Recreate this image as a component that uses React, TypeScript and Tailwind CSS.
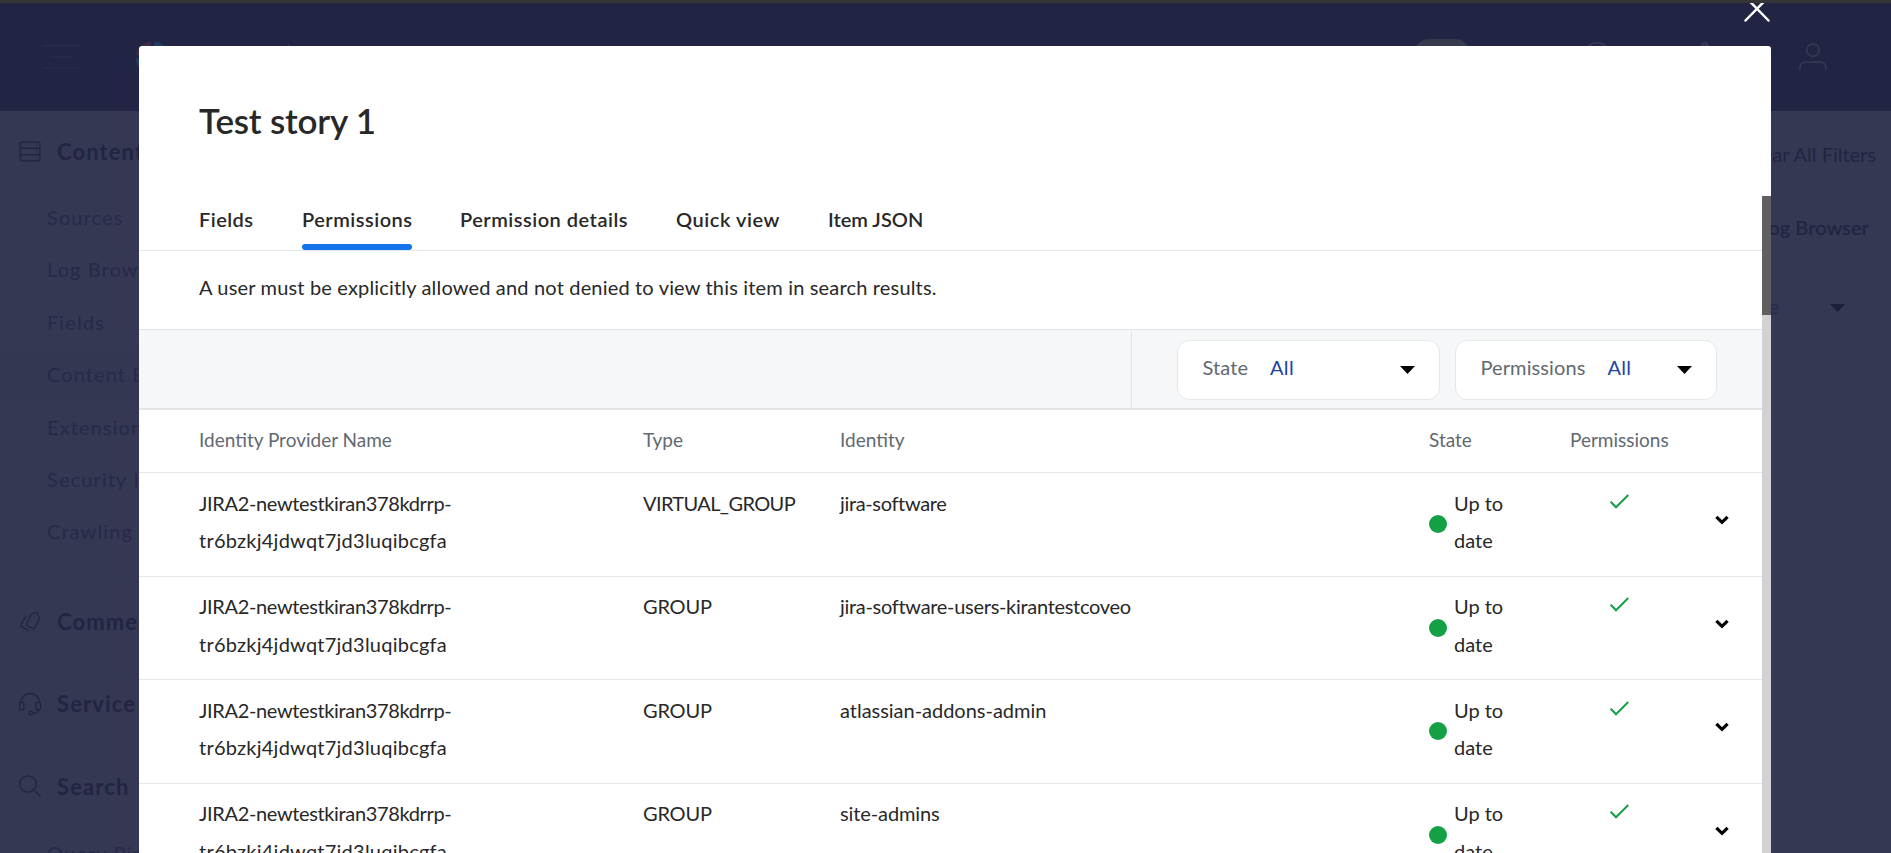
import type { ReactNode } from "react";

const tabs = [
  { label: "Fields", width: "w-[55px]", tracking: "tracking-[0.45px]" },
  { label: "Permissions", width: "w-[110px]", tracking: "tracking-[0.5px]", active: true },
  { label: "Permission details", width: "w-[168px]", tracking: "tracking-[0.5px]" },
  { label: "Quick view", width: "w-[104px]", tracking: "tracking-[0.55px]" },
  { label: "Item JSON", width: "w-[96px]", tracking: "tracking-normal" },
];

const rows = [
  { type: "VIRTUAL_GROUP", typeTracking: "tracking-[-0.62px]", identity: "jira-software", tracking: "tracking-[-0.35px]" },
  { type: "GROUP", typeTracking: "tracking-[-0.2px]", identity: "jira-software-users-kirantestcoveo", tracking: "tracking-[-0.3px]" },
  { type: "GROUP", typeTracking: "tracking-[-0.2px]", identity: "atlassian-addons-admin", tracking: "tracking-[-0.02px]" },
  { type: "GROUP", typeTracking: "tracking-[-0.2px]", identity: "site-admins", tracking: "tracking-[-0.1px]" },
];

const contentLinks = ["Sources", "Log Browser", "Fields", "Content Browser", "Extensions", "Security Identities", "Crawling Modules"];

const columns = "grid grid-cols-[444px_197px_589px_141px_192px] pl-[60px]";

function Caret({ className = "" }: { className?: string }) {
  return (
    <svg viewBox="0 0 15 8" className={`h-2 w-[15px] shrink-0 ${className}`} fill="currentColor">
      <path d="M0 0h15L7.5 8z" />
    </svg>
  );
}

function SectionTitle({ icon, children }: { icon: ReactNode; children: ReactNode }) {
  return (
    <div className="flex h-8 items-center gap-[15px] pl-[18px] text-[#222443]">
      {icon}
      <span className="text-[22px] leading-8 font-bold tracking-[1.1px] whitespace-nowrap">{children}</span>
    </div>
  );
}

const iconProps = { viewBox: "0 0 24 24", fill: "none", stroke: "currentColor", strokeWidth: 1.3, className: "size-6 shrink-0" };

function Sidebar() {
  return (
    <nav className="w-[260px] shrink-0 pt-[25px] text-xl">
      <SectionTitle
        icon={
          <svg {...iconProps}>
            <rect x="2" y="2.2" width="20" height="6.2" rx="2" />
            <rect x="2" y="8.4" width="20" height="6.2" rx="2" />
            <rect x="2" y="14.6" width="20" height="6.2" rx="2" />
            <path d="M18 5.3h1M18 11.5h1M18 17.7h1" />
          </svg>
        }
      >
        Content
      </SectionTitle>
      <ul className="mt-[24px]">
        {contentLinks.map((link) => (
          <li
            key={link}
            className={`h-[52.4px] pl-[47px] leading-[51px] tracking-[1.1px] whitespace-nowrap text-[#26294a] ${link === "Content Browser" ? "bg-[#343751]" : ""}`}
          >
            {link}
          </li>
        ))}
      </ul>
      <div className="mt-[47px] flex flex-col gap-[50.5px]">
        <SectionTitle
          icon={
            <svg {...iconProps}>
              <path d="M13.5 4.2l4.300-1.500c.9-.3 1.700.2 2 1.100l1.400 4.100c.2.500.1 1-.1 1.500l-4.200 8.200c-.5 1-1.600 1.400-2.600.9l-4.400-2.200c-1-.5-1.400-1.700-.9-2.700l3.700-8.600z" />
              <path d="M8.200 5.800l-4.600 7.800c-.8 1.400-.3 3 1 3.800l6.200 3.400" />
              <path d="M16.700 6.500h.8" />
            </svg>
          }
        >
          Commerce
        </SectionTitle>
        <SectionTitle
          icon={
            <svg {...iconProps}>
              <path d="M2.500 11C2.500 5.500 6.700 1.500 12 1.500S21.500 5.500 21.500 11" />
              <rect x="1.500" y="10" width="4.500" height="8" rx="2.200" />
              <rect x="18" y="10" width="4.500" height="8" rx="2.200" />
              <path d="M20.500 18c0 2-1.500 3-3.500 3h-2.500" />
              <circle cx="12.700" cy="21" r="1.800" />
            </svg>
          }
        >
          Service
        </SectionTitle>
        <SectionTitle
          icon={
            <svg {...iconProps}>
              <circle cx="10" cy="9" r="8.200" />
              <path d="M16 15l6.500 6.500" />
            </svg>
          }
        >
          Search
        </SectionTitle>
      </div>
      <div className="mt-[24px] pl-[47px] leading-[52px] tracking-[1.1px] whitespace-nowrap text-[#26294a]">Query Pipelines</div>
    </nav>
  );
}

function BackgroundPage() {
  return (
    <div className="flex h-full flex-col bg-[#353852]">
      <div className="h-[3px] shrink-0 bg-[#353535]" />
      <header className="flex h-[108px] shrink-0 items-start justify-between bg-[#222443] text-[#383b57]">
        <div className="flex">
          <svg viewBox="0 0 38 25" className="mt-[41px] ml-[42px] h-[25px] w-[38px] text-[#292c4b]" stroke="currentColor" strokeWidth="1.5">
            <path d="M0 1.500h38M8 13h22M0 24h38" />
          </svg>
          <svg viewBox="0 0 38 38" className="mt-[35px] ml-[54px] size-[38px]" fill="none" strokeWidth="5">
            <path d="M4 17A15 15 0 0 1 17 6" stroke="#3d2b4a" />
            <path d="M20 6A15 15 0 0 1 34 17" stroke="#213a63" />
            <path d="M4 20A15 15 0 0 0 18 34" stroke="#213c56" />
          </svg>
          <div className="mt-[41px] ml-[116px] h-8 w-px bg-[#353853]" />
        </div>
        <div className="flex pr-[64px]">
          <div className="mt-9 h-[30px] w-14 rounded-full bg-[#353a4c]" />
          <svg viewBox="0 0 28 28" className="mt-[39px] ml-[113px] size-7" fill="none" stroke="currentColor" strokeWidth="1.400">
            <circle cx="14" cy="14" r="13.200" />
          </svg>
          <svg viewBox="0 0 26 28" className="mt-[39px] ml-[81px] h-7 w-[26px]" fill="none" stroke="currentColor" strokeWidth="1.400">
            <path d="M10.500 3a2.500 2.500 0 0 1 5 0M4 22V12a9 9 0 0 1 18 0v10z" />
          </svg>
          <svg viewBox="0 0 28 28" className="mt-[40px] ml-[81px] size-7" fill="none" stroke="currentColor" strokeWidth="1.400">
            <circle cx="14" cy="7.200" r="6.200" />
            <path d="M1 27v-2.500a5.500 5.500 0 0 1 5.500-5.500h15a5.500 5.500 0 0 1 5.500 5.500V27" />
          </svg>
        </div>
      </header>
      <div className="flex min-h-0 flex-1 justify-between">
        <Sidebar />
        <main className="flex w-[200px] flex-col items-end text-xl whitespace-nowrap">
          <div className="flex h-20 w-full items-center justify-end border-b border-[#333650] pt-[6px] pr-[15px] text-[#222443]">Clear All Filters</div>
          <div className="flex h-[78px] w-full items-center justify-end border-b border-[#333650] pr-[22px] pb-[6px] font-semibold text-[#222443]">
            Open in Log Browser
          </div>
          <div className="mt-[9px] mr-[22px] flex h-[60px] w-[160px] items-center rounded-xl border border-[#363954] bg-[#353853] pr-[23px] pb-1">
            <span className="grow pr-[51px] text-right text-[#24294f]">None</span>
            <Caret className="mt-[3px] text-[#1d1f3a]" />
          </div>
        </main>
      </div>
    </div>
  );
}

function Filter({ label, className }: { label: string; className: string }) {
  return (
    <button className={`flex h-[60px] items-center rounded-xl border border-[#e5e8e8] bg-white pr-[24px] pl-[24.5px] text-xl ${className}`}>
      <span className="-mt-[7px] tracking-[0.1px] text-[#626971]">{label}</span>
      <span className="-mt-[7px] ml-[22px] grow text-left tracking-[0.3px] text-[#1d45a5]">All</span>
      <Caret className="-mt-px text-black" />
    </button>
  );
}

function PermissionsTable() {
  return (
    <div className="text-xl text-[#282829]">
      <div className={`${columns} h-[63px] border-b border-[#e5e8e8] text-[19px] leading-[60px] text-[#626971]`}>
        <span>Identity Provider Name</span>
        <span>Type</span>
        <span>Identity</span>
        <span>State</span>
        <span>Permissions</span>
      </div>
      {rows.map((row) => (
        <div key={row.identity} className={`${columns} h-[103.5px] border-b border-[#e5e8e8] leading-[37.5px]`}>
          <div className="pt-[11.5px]">
            <div className="tracking-[-0.36px]">JIRA2-newtestkiran378kdrrp-</div>
            <div className="tracking-[0.24px]">tr6bzkj4jdwqt7jd3luqibcgfa</div>
          </div>
          <div className={`pt-[11.5px] ${row.typeTracking}`}>{row.type}</div>
          <div className={`pt-[11.5px] ${row.tracking}`}>{row.identity}</div>
          <div className="flex items-center">
            <span className="size-[18px] rounded-full bg-[#14a145]" />
            <div className="ml-[7px] self-start pt-[11.5px]">
              Up to
              <br />
              date
            </div>
          </div>
          <div className="flex justify-between pr-[33px] pl-[40px]">
            <svg viewBox="0 0 19 15" className="mt-[20.5px] h-[15px] w-[19px]" fill="none" stroke="#14a145" strokeWidth="2">
              <path d="M.7 7.700l5.300 5.600L18.300 1" />
            </svg>
            <svg viewBox="0 0 14 10" className="mt-[42px] h-[10px] w-[14px]" fill="none" stroke="#000" strokeWidth="3.200">
              <path d="M1.400 1.800L7 7.300l5.600-5.500" />
            </svg>
          </div>
        </div>
      ))}
    </div>
  );
}

function Modal() {
  return (
    <section className="absolute top-[46px] left-[139px] flex h-[807px] w-[1632px] flex-col overflow-hidden rounded-t-[3px] bg-white text-[#282829]">
      <h1 className="h-[150px] shrink-0 pt-[53px] pl-[60px] text-[35px] leading-[42px] font-semibold tracking-[-0.2px]">Test story 1</h1>
      <div className="flex min-h-0 flex-1">
        <div className="w-[1623px] shrink-0 overflow-hidden whitespace-nowrap">
          <div className="flex h-[55px] gap-12 border-b border-[#e5e8e8] pl-[60px] text-xl leading-6 font-semibold">
            {tabs.map((tab) => (
              <div key={tab.label} className={`flex flex-col justify-between pt-[11px] ${tab.width} ${tab.tracking}`}>
                {tab.label}
                {tab.active && <div className="h-1.5 rounded-[3px] bg-[#1372ec]" />}
              </div>
            ))}
          </div>
          <p className="h-[78px] pt-6 pl-[60px] text-xl leading-6 tracking-[0.17px]">
            A user must be explicitly allowed and not denied to view this item in search results.
          </p>
          <div className="flex h-[81px] justify-end border-t border-b-2 border-[#e2e5e8] bg-[#f5f7f9] pt-px pr-[45px]">
            <div className="flex gap-[15px] border-l border-[#e2e5e8] pt-[9px] pl-[45px]">
              <Filter label="State" className="w-[263px]" />
              <Filter label="Permissions" className="w-[262px]" />
            </div>
          </div>
          <PermissionsTable />
        </div>
        <div className="w-[9px] bg-[#d2d2d2]">
          <div className="h-[119px] bg-[#606060]" />
        </div>
      </div>
    </section>
  );
}

export default function App() {
  return (
    <div className="relative h-[853px] w-full overflow-hidden font-['Lato',sans-serif]">
      <BackgroundPage />
      <svg viewBox="0 0 28 20" className="absolute top-[3px] left-[1743px] h-5 w-7" fill="none" stroke="#fff" strokeWidth="2.500" strokeLinecap="round">
        <path d="M2.500-6l23 23.500M25.500-6l-23 23.500" />
      </svg>
      <Modal />
    </div>
  );
}
